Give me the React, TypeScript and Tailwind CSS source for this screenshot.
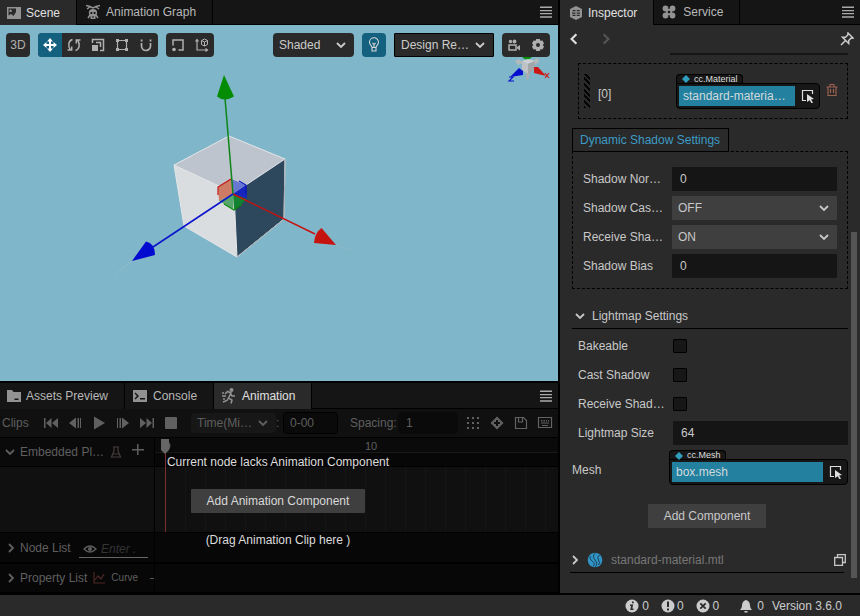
import type { ReactNode } from 'react'

type IconProps = { className?: string; children: ReactNode; box?: string }

function Icon({ className = 'size-4', box = '0 0 16 16', children }: IconProps) {
  return (
    <svg className={`shrink-0 ${className}`} viewBox={box} fill="currentColor" aria-hidden="true">
      {children}
    </svg>
  )
}

function Chevron({ className = 'size-2.5' }: { className?: string }) {
  return (
    <Icon className={className} box="0 0 10 10">
      <path d="M1 3l4 4 4-4" fill="none" stroke="currentColor" strokeWidth="1.8" />
    </Icon>
  )
}

function MenuButton() {
  return (
    <button aria-label="Panel menu" className="ml-auto mr-1.5 text-[#aaa]">
      <Icon className="h-3 w-3" box="0 0 12 12">
        <path d="M0 .5h12v1.5H0zM0 4h12v1.2H0zM0 7h12v1.2H0zM0 10.2h12v1.5H0z" />
      </Icon>
    </button>
  )
}

function Tab({ label, icon, active }: { label: string; icon: ReactNode; active?: boolean }) {
  return (
    <button
      className={`flex items-center gap-[5px] border-r border-black pl-[7px] pr-4 ${
        active ? 'bg-[#2a2a2a] text-[#e0e0e0]' : 'bg-[#151515] text-[#b8b8b8]'
      }`}
    >
      <span className="text-[#929292]">{icon}</span>
      {label}
    </button>
  )
}

function ToolButton({ label, active, children }: { label: string; active?: boolean; children: ReactNode }) {
  return (
    <button
      aria-label={label}
      className={`flex size-6 items-center justify-center ${active ? 'bg-[#14607f] text-white' : 'text-[#b0b0b0]'}`}
    >
      {children}
    </button>
  )
}

function Select({ id, label, value, className }: { id?: string; label?: string; value: string; className: string }) {
  return (
    <span className={`relative flex items-center ${className}`}>
      <select id={id} aria-label={label} className="h-full w-full appearance-none bg-transparent pl-1.5 outline-none">
        <option>{value}</option>
      </select>
      <Chevron className="pointer-events-none absolute right-2 size-2.5" />
    </span>
  )
}

function SceneCanvas() {
  return (
    <svg className="absolute inset-0 h-full w-full" viewBox="0 0 558 356" aria-hidden="true">
      <path d="M229 111l56 23-51 34-60-28z" fill="#bdc4cd" />
      <path d="M174 140l60 28 3 64-53-31z" fill="#dadde0" />
      <path d="M285 134l-51 34 3 64 47-38z" fill="#2d475d" />
      <path
        d="M229 111l56 23-1 60-47 38-53-31-10-61zM174 140l60 28 51-34M234 168l3 64"
        fill="none"
        stroke="#e4e6e8"
        strokeWidth="1"
      />
      <path d="M285 134l-1 60-47 38" fill="none" stroke="#a9afb4" strokeWidth="1" />
      <path d="M231 154l-13 8 1 14 14-7z" fill="#cd7b64" />
      <path d="M231 154l15 6-13 9z" fill="#6878d0" />
      <path d="M246 160l1 14-14-5z" fill="#1525bd" />
      <path d="M219 176l14-7v15z" fill="#58a56b" />
      <path d="M233 169l14 5-13 11z" fill="#138232" />
      <path d="M231 154l-13 8v8" fill="none" stroke="#c01512" strokeWidth="1.2" />
      <path d="M239 156l7 4v9" fill="none" stroke="#0a14c4" strokeWidth="1.2" />
      <path d="M224 179l10 6 8-6" fill="none" stroke="#078a0a" strokeWidth="1.2" />
      <path d="M233 169l-8-96" stroke="#0d8518" strokeWidth="1.5" />
      <path d="M233 169l82 40" stroke="#c51310" strokeWidth="1.5" />
      <path d="M233 169l-80 53" stroke="#0b14cb" strokeWidth="1.5" />
      <path d="M224 50l-7 21.500q7 6 17 0z" fill="#048c05" />
      <path d="M336 220l-14.500-17q-7 5-7.500 15z" fill="#c51310" />
      <path d="M132 236l14-19.500q9 2 9 13.500z" fill="#040bd0" />
      <path d="M115 249l17-13M336 220l18 6" stroke="#91bccb" strokeWidth=".7" />
    </svg>
  )
}

function AxisGizmo() {
  return (
    <svg className="absolute top-7 right-1.5 h-8 w-12" viewBox="0 0 48 32" aria-hidden="true">
      <path d="M18 4h10q-5 5-10 0z" fill="#069008" />
      <path d="M11 8l4-2 4 4-5 2z" fill="#b4b9bc" />
      <path d="M34 5l-6 3 2 4 5-3z" fill="#b4b9bc" />
      <path d="M18 8l6 3v10l-6-4z" fill="#c0c3c6" />
      <path d="M18 8l6-2 7 2-7 3z" fill="#ced1d3" />
      <path d="M24 11l7-3-1 9-6 4z" fill="#a3a6a9" />
      <path d="M21 20h5l-2 7h-1z" fill="#aaaeb1" />
      <path d="M6 24l9-9 4 3v4z" fill="#0710cf" />
      <path d="M30 14l4 0 8 9-12-3z" fill="#cb1814" />
      <path d="M5 24h4l-4 4h5" fill="none" stroke="#0710cf" strokeWidth="1.2" />
      <path d="M41 20l4 5M45 20l-4 5" stroke="#cb1814" strokeWidth="1.2" />
    </svg>
  )
}

function SceneToolbar() {
  return (
    <div className="relative z-10 flex h-6 items-stretch gap-2 pr-2 pl-1.5">
      <button className="w-6 rounded-sm bg-[#2a2a2a] text-[#b0b0b0]">3D</button>
      <div className="flex overflow-hidden rounded-sm bg-[#2a2a2a]">
        <ToolButton label="Move" active>
          <Icon>
            <path d="M8 1l3 3.500H9V7h2.500V5L15 8l-3.500 3V9H9v2.500h2L8 15l-3-3.500h2V9H4.500v2L1 8l3.500-3v2H7V4.500H5z" />
          </Icon>
        </ToolButton>
        <ToolButton label="Rotate">
          <Icon>
            <path
              d="M6.500 2.500C2.500 3.500 1.500 9 4.500 13M1.500 13h4.200V9.500M9.500 13.500c4-1 5-6.500 2-10.500M14.500 3h-4.200v3.500"
              fill="none"
              stroke="currentColor"
              strokeWidth="1.500"
            />
          </Icon>
        </ToolButton>
        <ToolButton label="Scale">
          <Icon>
            <path d="M2 8h6v6H2z" />
            <path d="M2.500 6V2.500h11v11H10M6 5.500h4.500V10" fill="none" stroke="currentColor" strokeWidth="1.500" />
          </Icon>
        </ToolButton>
        <ToolButton label="Rect">
          <Icon>
            <path d="M3.500 3.500h9v9h-9z" fill="none" stroke="currentColor" strokeWidth="1.200" />
            <path d="M2 2h3v3H2zM11 2h3v3h-3zM2 11h3v3H2zM11 11h3v3h-3z" />
          </Icon>
        </ToolButton>
        <ToolButton label="Snap">
          <Icon>
            <path d="M3.500 6v3a4.500 4.500 0 0 0 9 0V6" fill="none" stroke="currentColor" strokeWidth="1.700" />
            <path d="M2.700 2.500h1.800v2H2.700zM11.600 2.500h1.800v2h-1.800z" />
          </Icon>
        </ToolButton>
      </div>
      <div className="flex rounded-sm bg-[#2a2a2a]">
        <ToolButton label="Pivot">
          <Icon>
            <path d="M3 8.500V3h10v10H8.500" fill="none" stroke="currentColor" strokeWidth="1.500" />
            <circle cx="4" cy="12.500" r="1.800" />
          </Icon>
        </ToolButton>
        <ToolButton label="Coordinates">
          <Icon>
            <path d="M3 3v10h10M1.500 4.500L3 2.500l1.500 2M11.500 11.500l2 1.500-2 1.500" fill="none" stroke="currentColor" strokeWidth="1.200" />
            <path d="M10.500 2l3 1.500v4l-3 1.500-3-1.500v-4zM7.500 3.500l3 1.500 3-1.500M10.500 5v4" fill="none" stroke="currentColor" />
          </Icon>
        </ToolButton>
      </div>
      <Select label="Shading" value="Shaded" className="ml-auto w-[81px] rounded-sm bg-[#2a2a2a] text-[#ccc]" />
      <button aria-label="Scene lighting" className="flex w-6 items-center justify-center rounded-sm bg-[#14607f] text-[#d5d5d5]">
        <Icon>
          <path
            d="M6 10.500C6 9 3.500 8 3.500 5.200a4.500 4.500 0 0 1 9 0C12.500 8 10 9 10 10.500zM6 10.500V14h4v-3.500M6.500 6l1.500 1.500L9.500 6M8 7.500v3"
            fill="none"
            stroke="currentColor"
            strokeWidth="1.100"
          />
        </Icon>
      </button>
      <Select label="Resolution" value="Design Re…" className="w-[100px] rounded-[1px] border border-black bg-[#2a2a2a] text-[#ccc]" />
      <div className="flex rounded-sm bg-[#2a2a2a]">
        <ToolButton label="Camera">
          <Icon>
            <path d="M3 8h7v5H3z" fill="none" stroke="currentColor" strokeWidth="1.500" />
            <path d="M11 10l3-2v5.500l-3-2z" />
            <circle cx="4.500" cy="4.500" r="1.700" />
            <circle cx="8.500" cy="4.500" r="1.900" />
          </Icon>
        </ToolButton>
        <ToolButton label="Gizmo settings">
          <Icon>
            <path
              fillRule="evenodd"
              d="M6.300 2h3.400l.7 1.800 2-.3L14 6.300 12.800 8l1.200 1.700-1.600 2.800-2-.3L9.700 14H6.300l-.7-1.800-2 .3L2 9.700 3.200 8 2 6.300l1.600-2.800 2 .3zM8 6a2 2 0 1 0 0 4 2 2 0 0 0 0-4z"
            />
          </Icon>
        </ToolButton>
      </div>
    </div>
  )
}

const playback = [
  { label: 'First frame', d: 'M1 3h1.500v10H1zM8.500 3v10L3 8zM15 3v10L9 8z' },
  { label: 'Previous frame', d: 'M9 2.500v11L2 8zM10.500 3H12v10h-1.500zM13 3h1v10h-1z' },
  { label: 'Play', d: 'M3 1.500L14 8 3 14.500z' },
  { label: 'Next frame', d: 'M7 2.500v11L14 8zM4.500 3H6v10H4.500zM2 3h1v10H2z' },
  { label: 'Last frame', d: 'M15 3h-1.500v10H15zM7.500 3v10L13 8zM1 3v10l6-5z' },
  { label: 'Stop', d: 'M3 2h10q1 0 1 1v10q0 1-1 1H3q-1 0-1-1V3q0-1 1-1z' },
]

function AnimationPanel() {
  return (
    <section className="relative border-b border-black bg-[#070707] text-[#5f5f5f]">
      <div className="flex h-7 items-center bg-[#101010]">
        <span className="w-[37px] pl-0.5">Clips</span>
        {playback.map((item) => (
          <button key={item.label} aria-label={item.label} className="flex w-6 justify-center pl-1 text-[#606060]">
            <Icon>
              <path d={item.d} />
            </Icon>
          </button>
        ))}
        <Select label="Time format" value="Time(Mi…" className="ml-2.5 h-5 w-[85px] rounded-sm bg-[#171717]" />
        <label htmlFor="frame" className="w-[7px]">:</label>
        <input id="frame" defaultValue="0-00" className="h-[22px] w-[55px] rounded-sm border border-black bg-[#0a0a0a] px-1.5 outline-none" />
        <label htmlFor="spacing" className="ml-3 w-12">Spacing:</label>
        <input id="spacing" defaultValue="1" className="h-[22px] w-[60px] rounded-sm bg-[#0a0a0a] px-2 outline-none" />
        <div className="ml-auto flex gap-2 pr-[5px] text-[#626262]">
          <button aria-label="Snap to grid">
            <Icon>
              <path d="M2 2h2v2H2zM7 2h2v2H7zM12 2h2v2h-2zM2 7h2v2H2zM7 7h2v2H7zM12 7h2v2h-2zM2 12h2v2H2zM7 12h2v2H7zM12 12h2v2h-2z" />
            </Icon>
          </button>
          <button aria-label="Add keyframe">
            <Icon>
              <path fillRule="evenodd" d="M8 1.500L14.500 8 8 14.500 1.500 8zM7 5v2H5v2h2v2h2V9h2V7H9V5z" />
            </Icon>
          </button>
          <button aria-label="Save">
            <Icon>
              <path d="M2.500 2.500h8l3 3v8h-11zM5.500 3v4h4V3" fill="none" stroke="currentColor" strokeWidth="1.200" />
            </Icon>
          </button>
          <button aria-label="Shortcuts">
            <Icon>
              <path d="M1.500 2.500h13v10h-13z" fill="none" stroke="currentColor" strokeWidth="1.200" />
              <path d="M4 5h1.500v1.500H4zM6.500 5H8v1.500H6.500zM9 5h1v1.500H9zM11 5h1v1.500h-1zM4 7.500h8v1H4zM5 10h6v1H5z" />
            </Icon>
          </button>
        </div>
      </div>

      <div className="flex border-t border-black">
        <div className="w-[155px] shrink-0 border-r border-black">
          <div className="flex h-7 items-center bg-[#0a0a0a] pl-[5px]">
            <Chevron />
            <span className="ml-[5px] w-[90px]">Embedded Pl…</span>
            <Icon className="size-3 text-[#443d3c]" box="0 0 12 12">
              <path d="M3 1h6M4 1v4L1.500 11h9L8 5V1M3 8h6" fill="none" stroke="currentColor" strokeWidth="1.200" />
            </Icon>
            <button aria-label="Add embedded player" className="mb-1 ml-2.5">
              <Icon className="size-3" box="0 0 12 12">
                <path d="M5 0h1.500v5H12v1.500H6.500V11H5V6.500H0V5h5z" />
              </Icon>
            </button>
          </div>
          <div className="h-[67px] border-y border-black bg-[#101010]" />
          <div className="flex h-[29px] items-center pl-1.5">
            <Chevron className="size-2.5 -rotate-90" />
            <label htmlFor="node-filter" className="ml-1 w-[59px]">Node List</label>
            <div className="mt-0.5 mr-1.5 flex flex-1 items-center gap-1 border-b border-[#666] pt-px pl-1">
              <Icon className="size-3.5" box="0 0 14 14">
                <path d="M1 7q6-6 12 0-6 6-12 0z" fill="none" stroke="currentColor" strokeWidth="1.300" />
                <circle cx="7" cy="7" r="2" />
              </Icon>
              <input id="node-filter" placeholder="Enter ." className="w-10 bg-transparent italic outline-none placeholder:text-[#333]" />
            </div>
          </div>
          <div className="flex h-[30px] items-center overflow-hidden border-t-2 border-black pl-1.5">
            <Chevron className="size-2.5 -rotate-90" />
            <span className="ml-1 w-[74px] whitespace-nowrap">Property List</span>
            <Icon className="size-3 text-[#4d2925]" box="0 0 12 12">
              <path d="M1 0v11h11M2 8l3-4 3 3 3-5" fill="none" stroke="currentColor" strokeWidth="1.200" />
            </Icon>
            <button className="ml-1.5 text-[10px] leading-4">Curve</button>
            <span className="ml-3 h-px w-1 bg-[#555]" />
          </div>
        </div>

        <div className="relative flex-1">
          <div className="h-7">
            <div className="h-[15px] border-b border-[#191919] bg-[#0a0a0a] pt-0.5 pl-[210px] text-[11px] leading-3">10</div>
          </div>
          <div className="h-[67px] border-y border-black bg-[#101010] bg-[linear-gradient(to_right,#151515_1px,transparent_1px)] bg-size-[20px_100%] bg-position-[10px_0]" />
          <div className="h-[29px]" />
          <div className="h-[30px] border-t-2 border-black" />
          <svg className="absolute top-0 left-1.5 h-[94px] w-2.5" viewBox="0 0 10 94" aria-hidden="true">
            <path d="M4.500 14v80" stroke="#7b3030" />
            <path d="M0 1h8v11l-4 4-4-4z" fill="#666" />
            <path d="M8 4q3 3 0 8" fill="#555" />
          </svg>
        </div>
      </div>

      {/* Shown when the selected node has no animation */}
      <div className="absolute inset-0 flex flex-col items-center justify-center gap-[19px] pr-0.5 leading-4 text-[#dcdcdc]">
        <p>Current node lacks Animation Component</p>
        <button className="h-6 rounded-[1px] bg-[#3f3f3f] px-4 text-[#d8d8d8]">Add Animation Component</button>
        <p>(Drag Animation Clip here )</p>
      </div>
    </section>
  )
}

function AssetField({ type, name, className }: { type: string; name: string; className: string }) {
  return (
    <div className={className}>
      <div className="flex h-2.5 w-fit items-center gap-1 rounded-t-sm border border-b-0 border-black bg-[#171717] pr-1 pl-[5px] text-[9px] leading-[9px] text-[#ddd]">
        <Icon className="size-2 text-[#2f9dbb]" box="0 0 8 8">
          <path d="M4 0l4 4-4 4-4-4z" />
        </Icon>
        {type}
      </div>
      <div className="-mt-px flex h-[26px] items-center rounded-sm rounded-tl-none border border-black bg-[#171717] p-0.5">
        <button className="h-5 min-w-0 flex-1 bg-[#23809e] pl-1 text-left text-[#d0dadd]">{name}</button>
        <button aria-label={`Pick ${type}`} className="pr-0.5 pl-1.5 text-[#ddd]">
          <Icon className="size-3.5" box="0 0 14 14">
            <path d="M5 11.500H1.500v-10h10V5" fill="none" stroke="currentColor" strokeWidth="1.200" />
            <path d="M6 5l7 5-3 .5 2 3-1.500.8-1.800-3L6 13z" />
          </Icon>
        </button>
      </div>
    </div>
  )
}

const shadowRows = [
  { id: 'normal-bias', label: 'Shadow Nor…', value: '0', kind: 'input' },
  { id: 'casting', label: 'Shadow Cas…', value: 'OFF', kind: 'select' },
  { id: 'receive', label: 'Receive Sha…', value: 'ON', kind: 'select' },
  { id: 'bias', label: 'Shadow Bias', value: '0', kind: 'input' },
]

const lightmapFlags = ['Bakeable', 'Cast Shadow', 'Receive Shad…']

function Inspector() {
  return (
    <aside className="flex w-[302px] shrink-0 flex-col border-l-2 border-black bg-[#2a2a2a] text-[#c8c8c8]">
      <div className="flex h-[25px] bg-[#151515]">
        <Tab
          active
          label="Inspector"
          icon={
            <Icon className="ml-0.5 size-3.5" box="0 0 14 14">
              <path fillRule="evenodd" d="M7 0l6 3v8l-6 3-6-3V3zM3.500 4v1.300h3V4zM7.700 4v1.300h3V4zM3 6.400v1.300h3.500V6.400zM7.700 6.400v1.300H11V6.400zM3.500 8.800v1.300h3V8.800zM7.700 8.800v1.300h3V8.800z" />
            </Icon>
          }
        />
        <div className="flex flex-1 items-stretch border-b border-black">
          <Tab
            label="Service"
            icon={
              <Icon className="mr-0.5 ml-px size-3.5" box="0 0 14 14">
                <circle cx="3.500" cy="3.500" r="2.900" />
                <circle cx="10.500" cy="3.500" r="2.900" />
                <circle cx="3.500" cy="10.500" r="2.900" />
                <circle cx="10.500" cy="10.500" r="2.900" />
                <path d="M4 4h6v6H4z" />
                <circle cx="7" cy="7" r="1.300" fill="#151515" />
              </Icon>
            }
          />
          <MenuButton />
        </div>
      </div>

      <div className="flex flex-1">
        <div className="min-w-0 flex-1 pl-2.5">
          <div className="flex h-7 items-center">
            <button aria-label="Back" className="-ml-0.5 text-[#ddd]">
              <Chevron className="size-3 rotate-90" />
            </button>
            <button aria-label="Forward" className="ml-5 text-[#555]">
              <Chevron className="size-3 -rotate-90" />
            </button>
            <button aria-label="Lock" className="-mr-1.5 ml-auto text-[#ccc]">
              <Icon className="size-3.5" box="0 0 14 14">
                <path d="M8 1l5 5-2 .2-2.300 2.300V11.500L2.500 5.300h3L7.800 3zM5.500 8.500L1 13" fill="none" stroke="currentColor" strokeWidth="1.500" />
              </Icon>
            </button>
          </div>
          <div className="ml-[100px] h-0.5 bg-[#151515]" />

          <div className="mt-2 ml-2 flex h-14 items-center border border-dashed border-black pl-[5px]">
            <div className="h-[34px] w-1.5 bg-[repeating-linear-gradient(45deg,#050505_0,#050505_2px,#2a2a2a_2px,#2a2a2a_4px)]" />
            <span className="mt-1.5 ml-2 w-[78px]">[0]</span>
            <AssetField type="cc.Material" name="standard-materia…" className="w-[144px]" />
            <button aria-label="Remove" className="mb-0.5 ml-[5px] text-[#9a6050]">
              <Icon className="size-3.5" box="0 0 14 14">
                <path d="M1.500 4h11M5 4V1.500h4V4M3 4v8.500h8V4M5.500 6v4M8.500 6v4" fill="none" stroke="currentColor" strokeWidth="1.200" />
              </Icon>
            </button>
          </div>

          <div className="mt-[9px] ml-0.5">
            <h3 className="h-6 w-fit border border-black pr-2 pl-[7px] leading-[22px] text-[#3d9bc4]">Dynamic Shadow Settings</h3>
            <div className="-mt-px flex flex-col gap-[5px] border border-dashed border-black px-2.5 pt-[15px] pb-2.5">
              {shadowRows.map((row) => (
                <div key={row.id} className="flex h-6 items-center">
                  <label htmlFor={row.id} className="w-[89px] shrink-0 whitespace-nowrap">{row.label}</label>
                  {row.kind === 'input' ? (
                    <input id={row.id} defaultValue={row.value} className="h-6 w-full min-w-0 rounded-[1px] bg-[#151515] px-2 outline-none" />
                  ) : (
                    <Select id={row.id} value={row.value} className="h-6 flex-1 rounded-[1px] bg-[#3f3f3f]" />
                  )}
                </div>
              ))}
            </div>
          </div>

          <div className="mt-[15px] ml-0.5">
            <h3 className="flex h-[25px] items-center gap-[7px] border-b border-black pl-[3px]">
              <Chevron />
              Lightmap Settings
            </h3>
            <div className="mt-[5px] flex flex-col gap-[5px] pl-1.5">
              {lightmapFlags.map((flag) => (
                <label key={flag} className="flex h-6 items-center">
                  <span className="w-[95px]">{flag}</span>
                  <input type="checkbox" className="size-3.5 appearance-none rounded-[1px] border border-black bg-[#171717]" />
                </label>
              ))}
              <div className="flex h-6 items-center">
                <label htmlFor="lightmap-size" className="w-[95px] shrink-0">Lightmap Size</label>
                <input id="lightmap-size" defaultValue="64" className="h-6 w-full min-w-0 rounded-[1px] bg-[#151515] px-2 outline-none" />
              </div>
            </div>
          </div>

          <div className="mt-[5px] ml-0.5 flex">
            <span className="w-[97px] leading-10">Mesh</span>
            <AssetField type="cc.Mesh" name="box.mesh" className="flex-1" />
          </div>

          <div className="mt-3.5 flex justify-center pr-1">
            <button className="h-6 rounded-[1px] bg-[#3f3f3f] px-4">Add Component</button>
          </div>

          <div className="mt-5 mr-1 flex h-[25px] items-center border-b border-black">
            <Chevron className="size-2.5 -rotate-90" />
            <Icon className="ml-[7px] size-4 text-[#2f93c6]">
              <circle cx="8" cy="8" r="7.300" />
              <path d="M8.500 1Q4.500 4 8 8t0 7M3 4q-1 3 2.500 5.500T6 14M12.500 3q-3 2-1 5t0 5" fill="none" stroke="#1d4258" strokeWidth="1" />
            </Icon>
            <span className="ml-2 text-[#777]">standard-material.mtl</span>
            <button aria-label="Open asset" className="-mr-0.5 ml-auto text-[#c8c8c8]">
              <Icon className="size-3" box="0 0 12 12">
                <path d="M3.500 3V.7h7.800v7.800H9M.7 3.500h7.800v7.800H.7z" fill="none" stroke="currentColor" strokeWidth="1.300" />
              </Icon>
            </button>
          </div>
        </div>

        {/* Scroll rail */}
        <div className="flex w-3 flex-col items-center">
          <div className="flex-[207]" />
          <div className="w-1.5 flex-[346] bg-[#555]" />
          <div className="flex-[15]" />
        </div>
      </div>
    </aside>
  )
}

export default function App() {
  return (
    <div className="flex min-h-screen flex-col bg-[#2a2a2a] font-['Liberation_Sans',Arial,sans-serif] text-xs text-[#ccc]">
      <main className="flex flex-1 border-b-2 border-black">
        <div className="flex min-w-0 flex-1 flex-col">
          <div className="flex h-[25px] bg-[#151515]">
            <Tab
              active
              label="Scene"
              icon={
                <Icon className="size-3.5" box="0 0 14 14">
                  <path fillRule="evenodd" d="M0 1h14v12H0zM1.500 2.500v7L4 8l2.500 2L9 6V2.500zM3.500 3.500a1.300 1.300 0 1 0 .1 0z" />
                </Icon>
              }
            />
            <div className="flex flex-1 border-b border-black">
              <Tab
                label="Animation Graph"
                icon={
                  <Icon className="mr-px ml-0.5 h-4 w-3.5" box="0 0 14 16">
                    <path d="M0 1.500l4 1 3 1.500 3-1.500 4-1M1 5l3-2M13 5l-3-2M2 14l2-3M12 14l-2-3" fill="none" stroke="currentColor" strokeWidth="1.500" />
                    <path fillRule="evenodd" d="M7 5c5 0 5 5 2.500 7.500V15h-5v-2.500C2 10 2 5 7 5zM4.500 8v2h1.800V8zM7.700 8v2h1.800V8zM6.500 12h1v2h-1z" />
                  </Icon>
                }
              />
              <MenuButton />
            </div>
          </div>

          <section className="relative min-h-[356px] flex-1 bg-[#80b6c9] pt-2">
            <SceneCanvas />
            <AxisGizmo />
            <SceneToolbar />
          </section>

          <div className="flex h-[28px] border-t-2 border-black bg-[#151515]">
            <Tab
              label="Assets Preview"
              icon={
                <Icon className="size-3.5" box="0 0 14 14">
                  <path fillRule="evenodd" d="M0 1h5l1.500 2H14v10H0zM7.500 9.500V11h4V9.500z" />
                </Icon>
              }
            />
            <Tab
              label="Console"
              icon={
                <Icon className="mx-px size-3.5" box="0 0 14 14">
                  <path fillRule="evenodd" d="M0 1h14v12H0zM1.500 4.500L4 7 1.500 9.500l1 1L6 7 2.500 3.500zM7 9v1.500h5V9z" />
                </Icon>
              }
            />
            <Tab
              active
              label="Animation"
              icon={
                <Icon className="mx-px h-4 w-3.5" box="0 0 14 16">
                  <circle cx="9.500" cy="2" r="2" />
                  <path d="M3 6l2.500-2.500L9 5l-2.500 5 3.500 2-1 3.500M7 9l-2 3.500L1 14M8.500 5.500L10 8h3M0 5h2M0 8h4M1 11h2" fill="none" stroke="currentColor" strokeWidth="1.500" />
                </Icon>
              }
            />
            <div className="flex flex-1 border-b border-black">
              <MenuButton />
            </div>
          </div>
          <AnimationPanel />
        </div>
        <Inspector />
      </main>

      <footer className="flex h-[21px] items-center justify-end pr-[18px] text-[#ccc]">
        <Icon className="size-3.5" box="0 0 14 14">
          <circle cx="7" cy="7" r="6.500" />
          <path d="M7 2.500h1.700v1.700H7zM5 5.500h3.200l-.9 4h1.200V11H5.200l.9-4H5z" fill="#2a2a2a" />
        </Icon>
        <span className="ml-[3px]">0</span>
        <Icon className="ml-3 size-3.5" box="0 0 14 14">
          <circle cx="7" cy="7" r="6.500" />
          <path d="M6 2.500h2V8H6zM6 9.500h2v2H6z" fill="#2a2a2a" />
        </Icon>
        <span className="ml-0.5">0</span>
        <Icon className="ml-3 size-3.5" box="0 0 14 14">
          <circle cx="7" cy="7" r="6.500" />
          <path d="M4.300 4.300l5.400 5.400M9.700 4.300L4.300 9.700" stroke="#2a2a2a" strokeWidth="1.700" />
        </Icon>
        <span className="ml-[3px]">0</span>
        <Icon className="ml-5 size-3.5" box="0 0 14 14">
          <path d="M7 1q4 1 4 5.500 0 2.500 2 4.500H1q2-2 2-4.500Q3 2 7 1zM5.500 12h3v1.500h-3z" />
        </Icon>
        <span className="ml-1">0</span>
        <span className="ml-2">Version 3.6.0</span>
      </footer>
    </div>
  )
}
